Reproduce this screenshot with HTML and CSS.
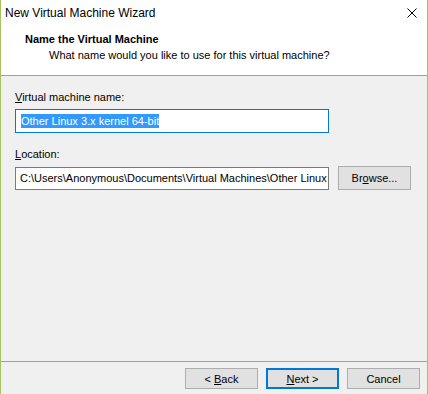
FILE: index.html
```html
<!DOCTYPE html>
<html lang="en">
<head>
  <meta charset="UTF-8">
  <title>New Virtual Machine Wizard</title>
  <link rel="stylesheet" href="styles.css">
</head>
<body>
  <div class="window">
    <div class="titlebar">
      <span class="title">New Virtual Machine Wizard</span>
      <svg class="close" width="10" height="10" viewBox="0 0 10 10">
        <path d="M0.5 0.5L9.5 9.5M9.5 0.5L0.5 9.5" stroke="#000" stroke-width="1"/>
      </svg>
    </div>

    <div class="header">
      <h1>Name the Virtual Machine</h1>
      <p>What name would you like to use for this virtual machine?</p>
    </div>

    <div class="content">
      <label class="field-label"><u>V</u>irtual machine name:</label>
      <div class="textbox focused"><span class="selected">Other Linux 3.x kernel 64-bit</span></div>

      <label class="field-label second"><u>L</u>ocation:</label>
      <div class="location-row">
        <div class="textbox">C:\Users\Anonymous\Documents\Virtual Machines\Other Linux 3.x kernel 64-bit</div>
        <button class="btn">Br<u>o</u>wse...</button>
      </div>
    </div>

    <div class="footer">
      <button class="btn">&lt; <u>B</u>ack</button>
      <button class="btn default"><u>N</u>ext &gt;</button>
      <button class="btn">Cancel</button>
    </div>
  </div>
</body>
</html>
```

FILE: styles.css
```css
body {
  margin: 0;
  padding: 0;
  font-family: 'Liberation Sans', Arial, sans-serif;
  font-size: 11px;
  color: #000;
}

.window {
  width: 426px;
  height: 394px;
  border-left: 1px solid #a6c35f;
  border-right: 1px solid #a6c35f;
  background-color: #f0f0f0;
  display: flex;
  flex-direction: column;
}

.titlebar {
  height: 25px;
  background-color: #fff;
  display: flex;
  align-items: center;
  justify-content: space-between;
  padding: 0 10px 0 4px;
}

.title {
  font-size: 12px;
  line-height: 16px;
}

.header {
  height: 51px;
  background-color: #fff;
  border-bottom: 1px solid #a0a0a0;
  padding: 7px 0 0 24px;
  box-sizing: border-box;
}

.header h1 {
  margin: 0;
  font-size: 11px;
  font-weight: bold;
  line-height: 15px;
}

.header p {
  margin: 1px 0 0;
  padding-left: 24px;
  line-height: 15px;
}

.content {
  flex: 1;
  padding: 14px 0 0 14px;
}

.field-label {
  display: block;
  line-height: 15px;
  margin-bottom: 4px;
}

.field-label.second {
  margin-top: 14px;
}

.textbox {
  width: 314px;
  height: 23px;
  border: 1px solid #7a7a7a;
  background-color: #fff;
  line-height: 21px;
  padding: 0 4px;
  box-sizing: border-box;
  white-space: nowrap;
  overflow: hidden;
}

.textbox.focused {
  border-color: #0078d7;
  height: 24px;
  line-height: 22px;
  padding-left: 5px;
}

.selected {
  background-color: #3399ff;
  color: #fff;
  padding: 1px 0;
}

.location-row {
  display: flex;
  align-items: center;
  gap: 9px;
}

.btn {
  width: 73px;
  height: 24px;
  font-family: inherit;
  font-size: 11px;
  color: #000;
  background-color: #e1e1e1;
  border: 1px solid #adadad;
  padding: 0;
}

.footer .btn {
  height: 21px;
}

.btn.default {
  border: 2px solid #0078d7;
}

.footer {
  height: 33px;
  border-top: 1px solid #a0a0a0;
  display: flex;
  justify-content: flex-end;
  align-items: flex-start;
  gap: 8px;
  padding: 6px 7px 0 0;
  box-sizing: border-box;
}
```
